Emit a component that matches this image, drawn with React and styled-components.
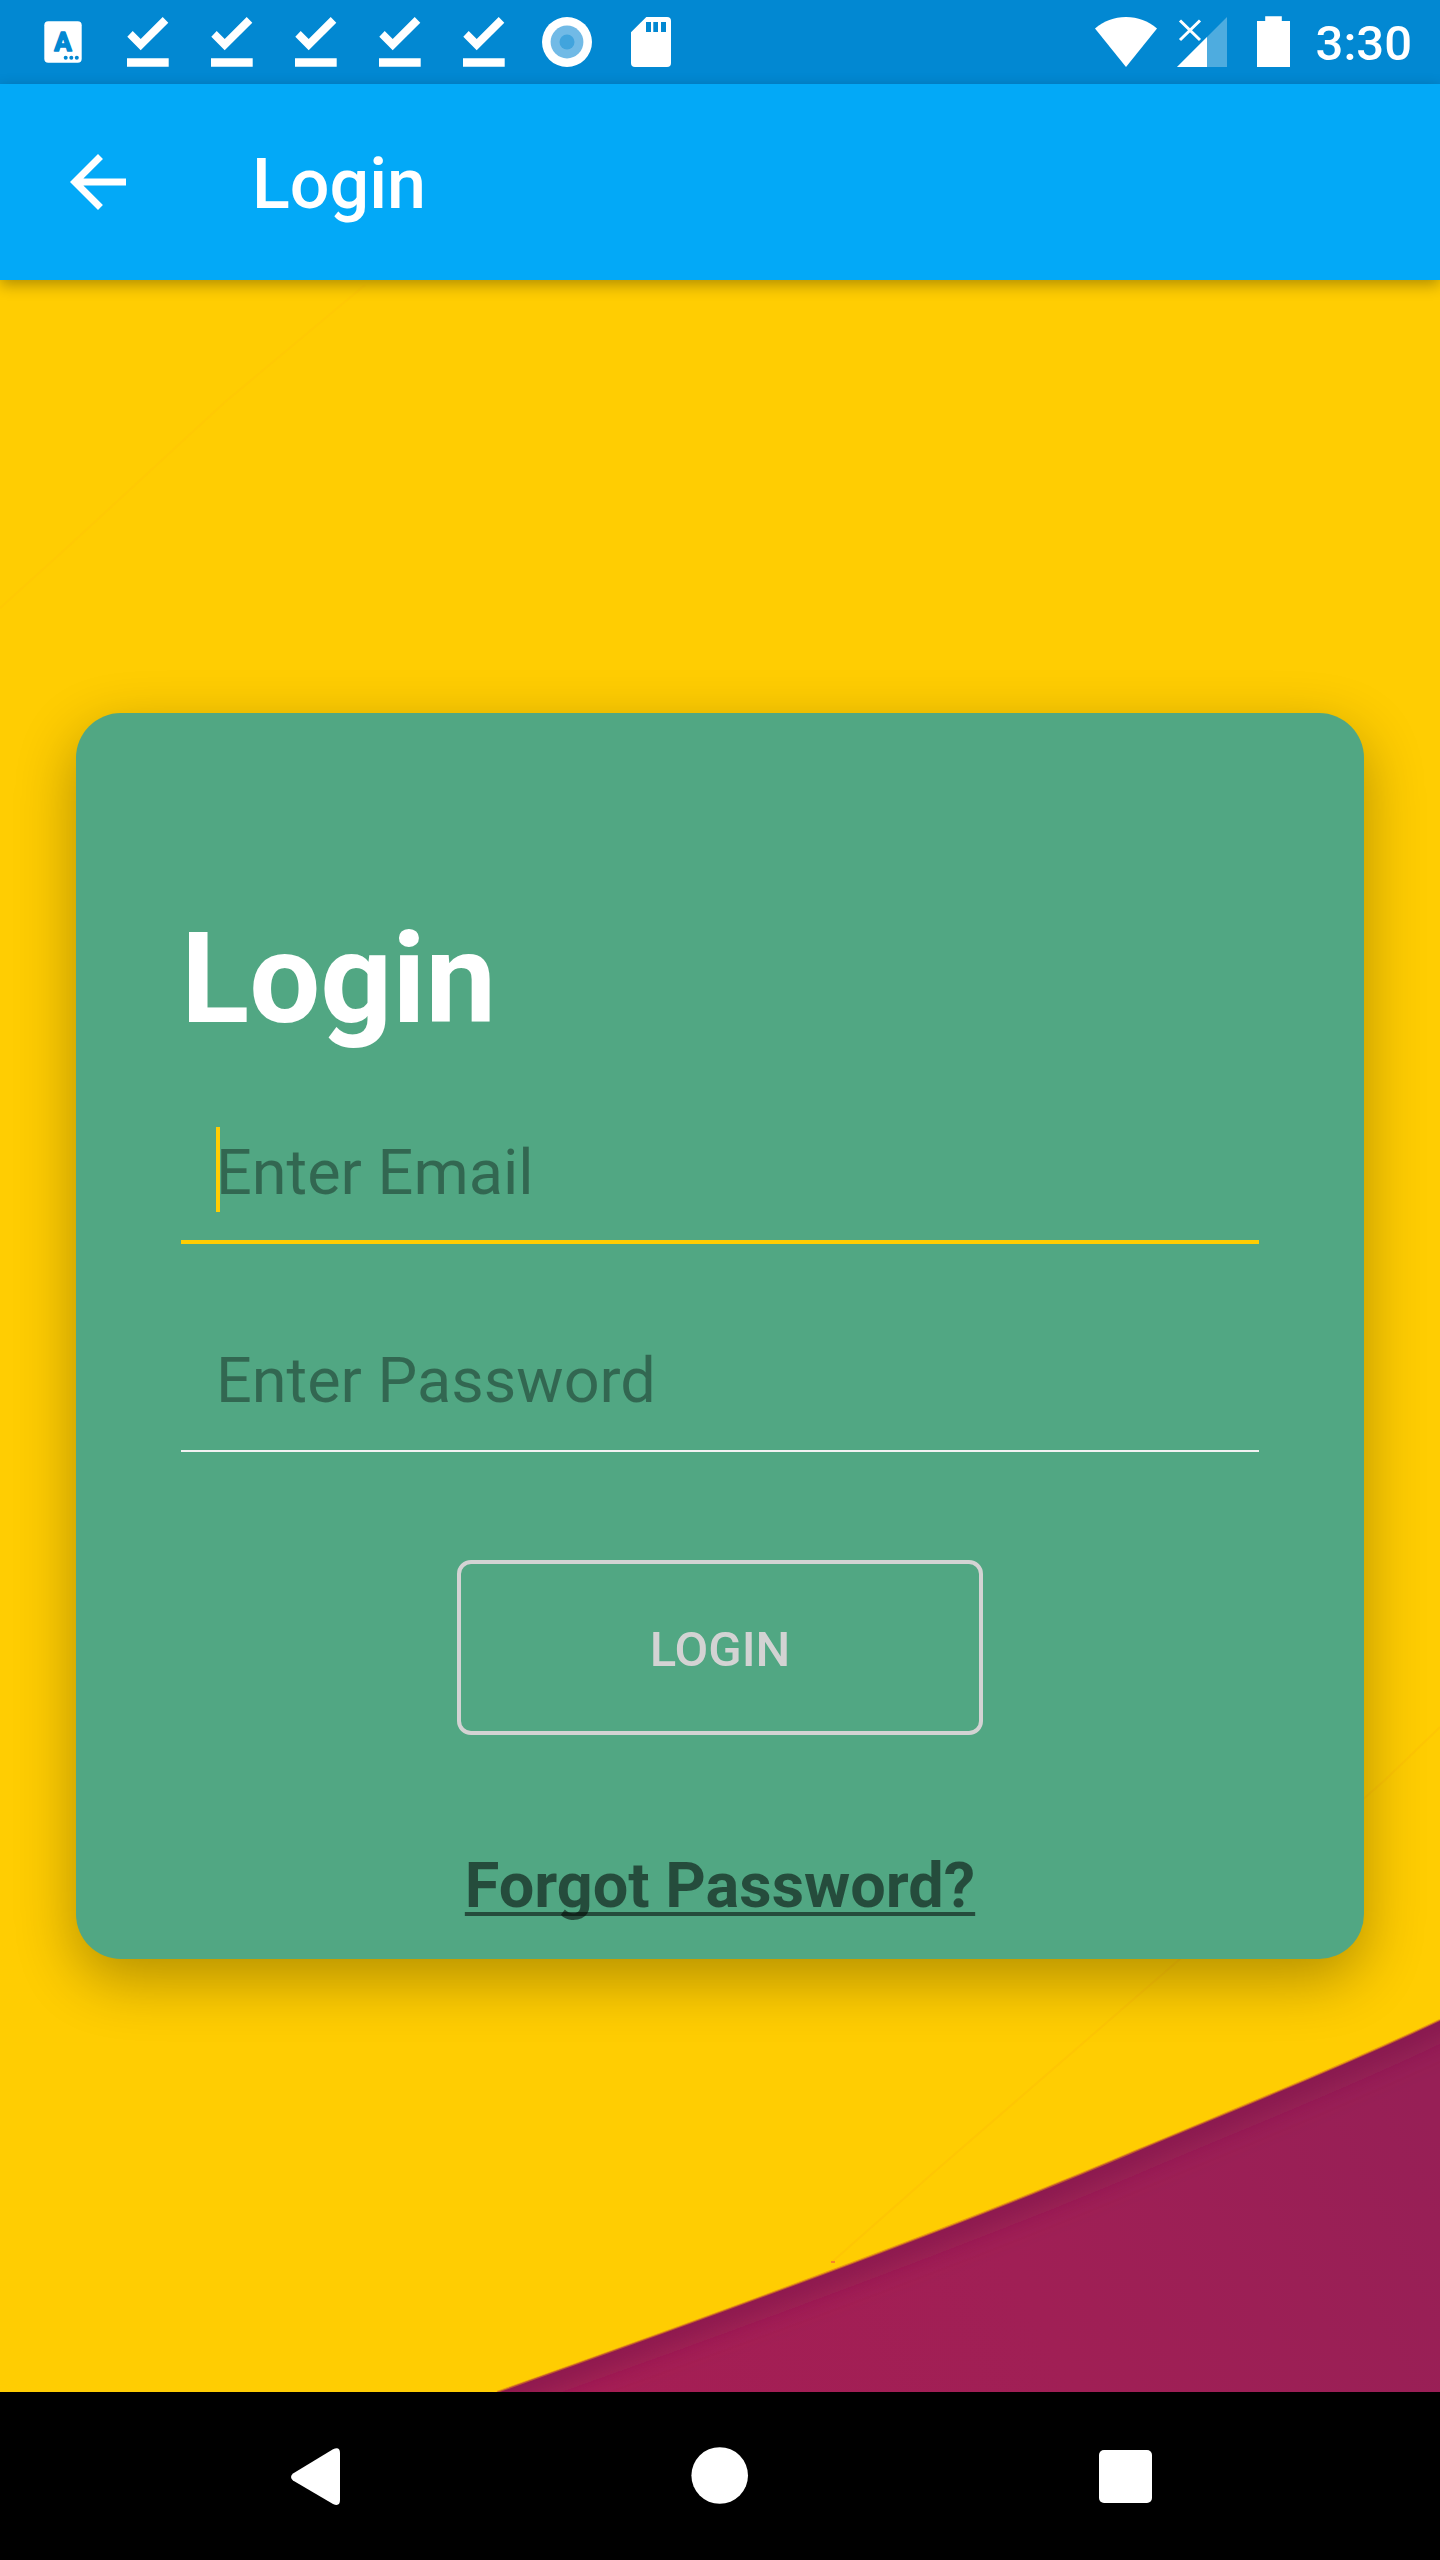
import React from "react";
import styled, { createGlobalStyle } from "styled-components";

const color = {
  yellow: "#ffcd02",
  blue: "#03a9f7",
  darkBlue: "#0288d2",
  green: "#51a783",
  grey: "#d3d3d3",
};

const GlobalStyle = createGlobalStyle`
  *, *::before, *::after { box-sizing: border-box; }
  body {
    margin: 0;
    background: #000;
    font-family: Roboto, "Liberation Sans", sans-serif;
  }
`;

const Screen = styled.div`
  display: flex;
  flex-direction: column;
  min-height: 100vh;
`;

const StatusBar = styled.div`
  display: flex;
  justify-content: space-between;
  height: 84px;
  padding: 0 28px 0 21px;
  background: ${color.darkBlue};
`;

const StatusGroup = styled.div`
  display: flex;
  align-items: center;
`;

const StatusIcon = styled.svg`
  display: block;
  flex: none;
  width: ${(p) => p.$width || 84}px;
  height: 84px;
  fill: #fff;
`;

const Clock = styled.time`
  padding-top: 4px;
  color: #fff;
  font-size: 49px;
  font-weight: 500;
  line-height: 56px;
`;

const AppBar = styled.header`
  position: relative;
  z-index: 1;
  display: flex;
  align-items: center;
  gap: 56px;
  height: 196px;
  background: ${color.blue};
  box-shadow: 0 5px 14px rgba(0, 0, 0, 0.3);
`;

const BackButton = styled.button`
  display: grid;
  place-items: center;
  width: 196px;
  height: 196px;
  padding: 0;
  border: 0;
  background: none;
`;

const BackIcon = styled.svg`
  width: 84px;
  height: 84px;
  fill: #fff;
`;

const BarTitle = styled.h1`
  margin: 0;
  padding-top: 4px;
  color: #fff;
  font-size: 70px;
  font-weight: 500;
  line-height: 82px;
`;

const Content = styled.main`
  position: relative;
  flex: 1;
  display: grid;
  align-items: center;
  padding: 76px;
  overflow: hidden;
  background: ${color.yellow};
`;

const Backdrop = styled.svg`
  position: absolute;
  inset: 0;
  width: 100%;
  height: 100%;
`;

const Card = styled.form`
  position: relative;
  display: flex;
  flex-direction: column;
  padding: 192px 105px 36px;
  border-radius: 45px;
  background: ${color.green};
  box-shadow: 0 20px 60px rgba(0, 0, 0, 0.3);
`;

const CardTitle = styled.h2`
  margin: 0 0 35px;
  color: #fff;
  font-size: 126px;
  font-weight: 700;
  line-height: 148px;
`;

const Fields = styled.div`
  display: flex;
  flex-direction: column;
  gap: 52px;
  margin-bottom: 108px;
`;

const Field = styled.label`
  position: relative;
  display: block;
`;

const Input = styled.input`
  display: block;
  width: 100%;
  height: 156px;
  padding: 12px 35px 0;
  border: 0;
  border-radius: 0;
  outline: 0;
  background: none;
  box-shadow: inset 0 ${(p) => (p.$active ? `-4px ${color.yellow}` : "-2px #f2f2f2")};
  color: #000;
  font-family: inherit;
  font-size: 63px;
  line-height: 74px;

  &::placeholder {
    color: rgba(0, 0, 0, 0.38);
    opacity: 1;
  }
`;

const Caret = styled.span`
  position: absolute;
  top: 39px;
  left: 35px;
  width: 4px;
  height: 85px;
  background: ${color.yellow};
`;

const LoginButton = styled.button`
  align-self: center;
  width: 526px;
  height: 175px;
  margin-bottom: 114px;
  padding: 4px 0 0;
  border: 4px solid ${color.grey};
  border-radius: 14px;
  background: none;
  color: ${color.grey};
  font-family: inherit;
  font-size: 49px;
  font-weight: 500;
  line-height: 56px;
`;

const ForgotLink = styled.a`
  align-self: center;
  color: rgba(0, 0, 0, 0.54);
  font-size: 63px;
  font-weight: 700;
  line-height: 74px;
  text-decoration: underline;
  text-decoration-thickness: 4px;
  text-decoration-skip-ink: none;
  text-underline-offset: 5px;
`;

const NavBar = styled.nav`
  display: flex;
  justify-content: center;
  gap: 126px;
  height: 168px;
  background: #000;
`;

const NavButton = styled.button`
  display: grid;
  place-items: center;
  width: 280px;
  height: 168px;
  padding: 0;
  border: 0;
  background: none;
`;

const NavIcon = styled.svg`
  width: 84px;
  height: 84px;
  fill: #fff;
`;

const DownloadDone = () => (
  <StatusIcon viewBox="0 0 84 84" aria-hidden="true">
    <path d="M22.3 36.7 27.7 31l8 8 22-22 5.6 5.7-27.6 27.6zM22 58.3h41.7v8.4H22z" />
  </StatusIcon>
);

const EDGE = "M497 2112C720 2033 970 1942 1140 1869C1240 1827 1350 1783 1440 1740";

export default function App() {
  return (
    <Screen>
      <GlobalStyle />
      <StatusBar>
        <StatusGroup>
          <StatusIcon viewBox="0 0 84 84" aria-hidden="true">
            <rect x="23.3" y="21.3" width="37.4" height="41.4" rx="4" />
            <text
              x="42"
              y="51"
              textAnchor="middle"
              fontSize="26"
              fontWeight="700"
              fill={color.darkBlue}
              stroke={color.darkBlue}
              strokeWidth="1.5"
              strokeLinejoin="round"
            >
              A
            </text>
            <g fill={color.darkBlue}>
              <circle cx="44.7" cy="57.8" r="2" />
              <circle cx="50.3" cy="57.8" r="2" />
              <circle cx="55.8" cy="57.8" r="2" />
            </g>
          </StatusIcon>
          {[0, 1, 2, 3, 4].map((n) => (
            <DownloadDone key={n} />
          ))}
          <StatusIcon viewBox="0 0 84 84" aria-hidden="true">
            <circle cx="42" cy="42" r="25" />
            <circle cx="42" cy="42" r="16.4" fill="#71bae6" />
            <circle cx="42" cy="42" r="7.5" fill="#41a4dd" />
          </StatusIcon>
          <StatusIcon viewBox="0 0 84 84" aria-hidden="true">
            <path d="M37.3 17H58a4 4 0 0 1 4 4v42a4 4 0 0 1-4 4H26a4 4 0 0 1-4-4V32.2z" />
            <path fill={color.darkBlue} d="M37 22h5v10h-5zM44.3 22H49v10h-4.7zM52 22h5v10h-5z" />
          </StatusIcon>
        </StatusGroup>
        <StatusGroup>
          <StatusIcon $width={84} viewBox="0 0 84 84" aria-hidden="true">
            <path d="M42 67 11 28.5C20 21 30 17 42 17s22 4 31 11.5z" />
          </StatusIcon>
          <StatusIcon $width={70} viewBox="0 0 70 84" aria-hidden="true">
            <path d="M59 17v50H9z" fillOpacity=".3" />
            <path d="M39 37v30H9z" />
            <path d="m12 20.5 20 19.500m0-19.500L12 40" fill="none" stroke="#fff" strokeWidth="3" />
          </StatusIcon>
          <StatusIcon $width={78} viewBox="0 0 78 84" aria-hidden="true">
            <path d="M27.2 16.200h16.600V21H52v46H19V21h8.200z" />
          </StatusIcon>
          <Clock>3:30</Clock>
        </StatusGroup>
      </StatusBar>

      <AppBar>
        <BackButton type="button" aria-label="Back">
          <BackIcon viewBox="0 0 24 24" aria-hidden="true">
            <path d="M20 11H7.83l5.59-5.59L12 4l-8 8 8 8 1.41-1.41L7.83 13H20z" />
          </BackIcon>
        </BackButton>
        <BarTitle>Login</BarTitle>
      </AppBar>

      <Content>
        <Backdrop viewBox="0 0 1440 2112" preserveAspectRatio="none" aria-hidden="true">
          <defs>
            <linearGradient id="wine" x1="0" x2="1" y1="0.5" y2="0.3">
              <stop offset="0" stopColor="#a51e54" />
              <stop offset="0.5" stopColor="#a01f55" />
              <stop offset="1" stopColor="#971f56" />
            </linearGradient>
            <clipPath id="hill">
              <path d={`${EDGE}V2112z`} />
            </clipPath>
            <filter id="soft" x="-10%" y="-20%" width="120%" height="140%">
              <feGaussianBlur stdDeviation="14" />
            </filter>
          </defs>
          <path d="M0 328 60 274 225 122 365 5" fill="none" stroke="#ffc904" strokeWidth="2" />
          <path d="M1440 1447 1385 1500 1180 1679 925 1900 832 1982" fill="none" stroke="#fec604" strokeWidth="2" />
          <path d={`${EDGE}V2112z`} fill="url(#wine)" />
          <g clipPath="url(#hill)">
            <path
              d="M440 2132 497 2112C720 2033 970 1942 1140 1869C1240 1827 1350 1783 1440 1740L1500 1712"
              fill="none"
              stroke="#7e164a"
              strokeOpacity=".8"
              strokeWidth="26"
              filter="url(#soft)"
            />
          </g>
          <path d={EDGE} fill="none" stroke="#d9781f" strokeOpacity=".6" strokeWidth="2" />
          <path d="M831 1982h4" stroke="#f5852a" strokeWidth="2" />
        </Backdrop>

        <Card onSubmit={(e) => e.preventDefault()}>
          <CardTitle>Login</CardTitle>
          <Fields>
            <Field>
              <Input $active type="email" placeholder="Enter Email" aria-label="Enter Email" />
              <Caret />
            </Field>
            <Field>
              <Input type="password" placeholder="Enter Password" aria-label="Enter Password" />
            </Field>
          </Fields>
          <LoginButton type="submit">LOGIN</LoginButton>
          <ForgotLink href="#forgot">Forgot Password?</ForgotLink>
        </Card>
      </Content>

      <NavBar>
        <NavButton type="button" aria-label="Back">
          <NavIcon viewBox="0 0 84 84" aria-hidden="true">
            <path d="M21 39.5 61 15.2Q68 12 68 19V66Q68 73 61 70L21 46.5Q17 43 21 39.5z" />
          </NavIcon>
        </NavButton>
        <NavButton type="button" aria-label="Home">
          <NavIcon viewBox="0 0 84 84" aria-hidden="true">
            <circle cx="41.7" cy="41.5" r="28.3" />
          </NavIcon>
        </NavButton>
        <NavButton type="button" aria-label="Recent apps">
          <NavIcon viewBox="0 0 84 84" aria-hidden="true">
            <rect x="15" y="16" width="53" height="53" rx="5" />
          </NavIcon>
        </NavButton>
      </NavBar>
    </Screen>
  );
}
